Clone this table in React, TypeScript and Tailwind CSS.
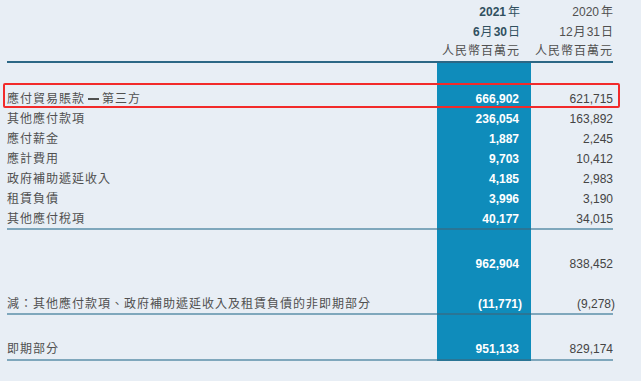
import React from "react";

const FONT = { fontFamily: '"Liberation Sans", "Noto Sans CJK TC", sans-serif' };

type Row = { label: React.ReactNode; a: string; b: string; hang?: boolean };

const items: Row[] = [
  { label: "其他應付款項", a: "236,054", b: "163,892" },
  { label: "應付薪金", a: "1,887", b: "2,245" },
  { label: "應計費用", a: "9,703", b: "10,412" },
  { label: "政府補助遞延收入", a: "4,185", b: "2,983" },
  { label: "租賃負債", a: "3,996", b: "3,190" },
];

function Spacer({ h }: { h: string }) {
  return (
    <div className={`flex ${h}`}>
      <div className="w-[430px]" />
      <div className="w-[94px] bg-[#0f8cbb]" />
      <div className="w-[82px]" />
    </div>
  );
}

function DataRow({
  label,
  a,
  b,
  hang,
  border,
  h = "h-[20px]",
}: Row & { border?: boolean; h?: string }) {
  const lb = border ? "border-b-2 border-[#7fa7bc]" : "";
  const cb = border ? "border-b-2 border-[#2a7595]" : "";
  return (
    <div className="flex">
      <div className={`w-[430px] ${h} ${lb} flex items-center text-[12px] tracking-[1px] text-[#505050]`}>
        {label}
      </div>
      <div className={`w-[94px] ${h} ${cb} bg-[#0f8cbb] flex items-center justify-end pr-3 text-[12px] font-bold text-white`}>
        <span className={hang ? "-mr-[3px]" : ""}>{a}</span>
      </div>
      <div className={`w-[82px] ${h} ${lb} flex items-center justify-end text-[12px] text-[#444]`}>
        <span className={hang ? "-mr-[2px]" : ""}>{b}</span>
      </div>
    </div>
  );
}

export default function App() {
  return (
    <div className="w-[641px] h-[381px] bg-[#e8eef5] overflow-hidden pl-[7px]" style={FONT}>
      <div className="w-[606px]">
        {/* header */}
        <div className="pt-[2px]">
          <div className="flex h-[20px] items-center">
            <div className="w-[430px]" />
            <div className="w-[94px] pr-[11px] text-right text-[12px] text-[#30505f]">
              <span className="font-bold">2021</span>
              <span className="ml-[2px]">年</span>
            </div>
            <div className="w-[82px] text-right text-[12px] text-[#505050]">
              2020<span className="ml-[2px]">年</span>
            </div>
          </div>
          <div className="flex h-[19px] items-center">
            <div className="w-[430px]" />
            <div className="w-[94px] pr-[11px] text-right text-[12px] text-[#30505f]">
              <span className="font-bold">6</span>
              <span className="mx-[1px]">月</span>
              <span className="font-bold">30</span>
              <span className="ml-[1px]">日</span>
            </div>
            <div className="w-[82px] text-right text-[12px] text-[#505050]">
              12<span className="mx-[1px]">月</span>31<span className="ml-[1px]">日</span>
            </div>
          </div>
          <div className="flex h-[20px] items-center">
            <div className="w-[430px]" />
            <div className="w-[94px] pr-[11px] text-right text-[12px] tracking-[1px] text-[#505050]">
              人民幣百萬元
            </div>
            <div className="w-[82px] text-right text-[12px] tracking-[1px] text-[#505050] -mr-[1px]">
              人民幣百萬元
            </div>
          </div>
        </div>
        <div className="h-[2px] bg-[#2c6785]" />

        {/* body */}
        <Spacer h="h-[26px]" />
        <div className="relative">
          <DataRow
            label={
              <>
                應付貿易賬款
                <span className="inline-flex items-center w-[17px] h-[12px] pl-[3px]">
                  <span className="block h-[2px] w-[11px] bg-[#505050]" />
                </span>
                第三方
              </>
            }
            a="666,902"
            b="621,715"
          />
          <div className="absolute -left-[4px] -right-[7px] -top-[6px] bottom-[1px] border-2 border-[#f22a2a] rounded-[2px] pointer-events-none" />
        </div>
        {items.map((r, i) => (
          <DataRow key={i} {...r} />
        ))}
        <DataRow label="其他應付稅項" a="40,177" b="34,015" border h="h-[21px]" />
        <Spacer h="h-[24px]" />
        <DataRow label="" a="962,904" b="838,452" />
        <Spacer h="h-[20px]" />
        <DataRow
          label="減：其他應付款項、政府補助遞延收入及租賃負債的非即期部分"
          a="(11,771)"
          b="(9,278)"
          hang
          border
          h="h-[21px]"
        />
        <Spacer h="h-[24px]" />
        <DataRow label="即期部分" a="951,133" b="829,174" border h="h-[22px]" />
      </div>
    </div>
  );
}
